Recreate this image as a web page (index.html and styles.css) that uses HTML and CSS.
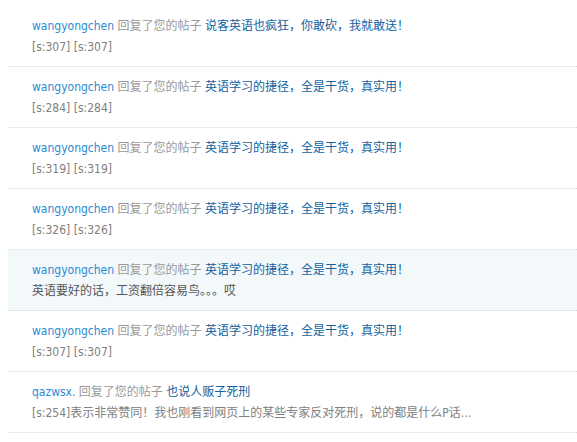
FILE: index.html
```html
<!DOCTYPE html>
<html lang="zh-CN">
<head>
  <meta charset="UTF-8">
  <title>回复我的</title>
  <link rel="stylesheet" href="styles.css">
</head>
<body>
  <ul class="notices">
    <li class="notice">
      <p><a class="user" href="#">wangyongchen</a> <span class="act">回复了您的帖子</span> <a class="topic" href="#">说客英语也疯狂，你敢砍，我就敢送！</a></p>
      <p class="msg">[s:307] [s:307]</p>
    </li>
    <li class="notice">
      <p><a class="user" href="#">wangyongchen</a> <span class="act">回复了您的帖子</span> <a class="topic" href="#">英语学习的捷径，全是干货，真实用！</a></p>
      <p class="msg">[s:284] [s:284]</p>
    </li>
    <li class="notice">
      <p><a class="user" href="#">wangyongchen</a> <span class="act">回复了您的帖子</span> <a class="topic" href="#">英语学习的捷径，全是干货，真实用！</a></p>
      <p class="msg">[s:319] [s:319]</p>
    </li>
    <li class="notice">
      <p><a class="user" href="#">wangyongchen</a> <span class="act">回复了您的帖子</span> <a class="topic" href="#">英语学习的捷径，全是干货，真实用！</a></p>
      <p class="msg">[s:326] [s:326]</p>
    </li>
    <li class="notice hover">
      <p><a class="user" href="#">wangyongchen</a> <span class="act">回复了您的帖子</span> <a class="topic" href="#">英语学习的捷径，全是干货，真实用！</a></p>
      <p class="msg dark">英语要好的话，工资翻倍容易鸟。。。哎</p>
    </li>
    <li class="notice">
      <p><a class="user" href="#">wangyongchen</a> <span class="act">回复了您的帖子</span> <a class="topic" href="#">英语学习的捷径，全是干货，真实用！</a></p>
      <p class="msg">[s:307] [s:307]</p>
    </li>
    <li class="notice">
      <p><a class="user" href="#">qazwsx.</a> <span class="act">回复了您的帖子</span> <a class="topic" href="#">也说人贩子死刑</a></p>
      <p class="msg">[s:254]表示非常赞同！我也刚看到网页上的某些专家反对死刑，说的都是什么P话...</p>
    </li>
  </ul>
</body>
</html>
```
FILE: styles.css
```css
body { margin: 0; background: #fff; font-family: Tahoma, "DejaVu Sans Condensed", "Noto Sans CJK SC", sans-serif; font-size: 12px; }
.notices { list-style: none; margin: 0; padding: 6px 0 0 8px; }
.notice { padding: 10px 0 8px 24px; border-bottom: 1px dotted #d6d6d6; line-height: 21px; }
.notice p { margin: 0; white-space: nowrap; }
.notice.hover { background: #f3f8fb; }
a { text-decoration: none; }
.user { color: #2b8ad0; }
.act { color: #999; }
.topic { color: #11629f; }
.msg { color: #808080; }
.msg.dark { color: #555; }
```
